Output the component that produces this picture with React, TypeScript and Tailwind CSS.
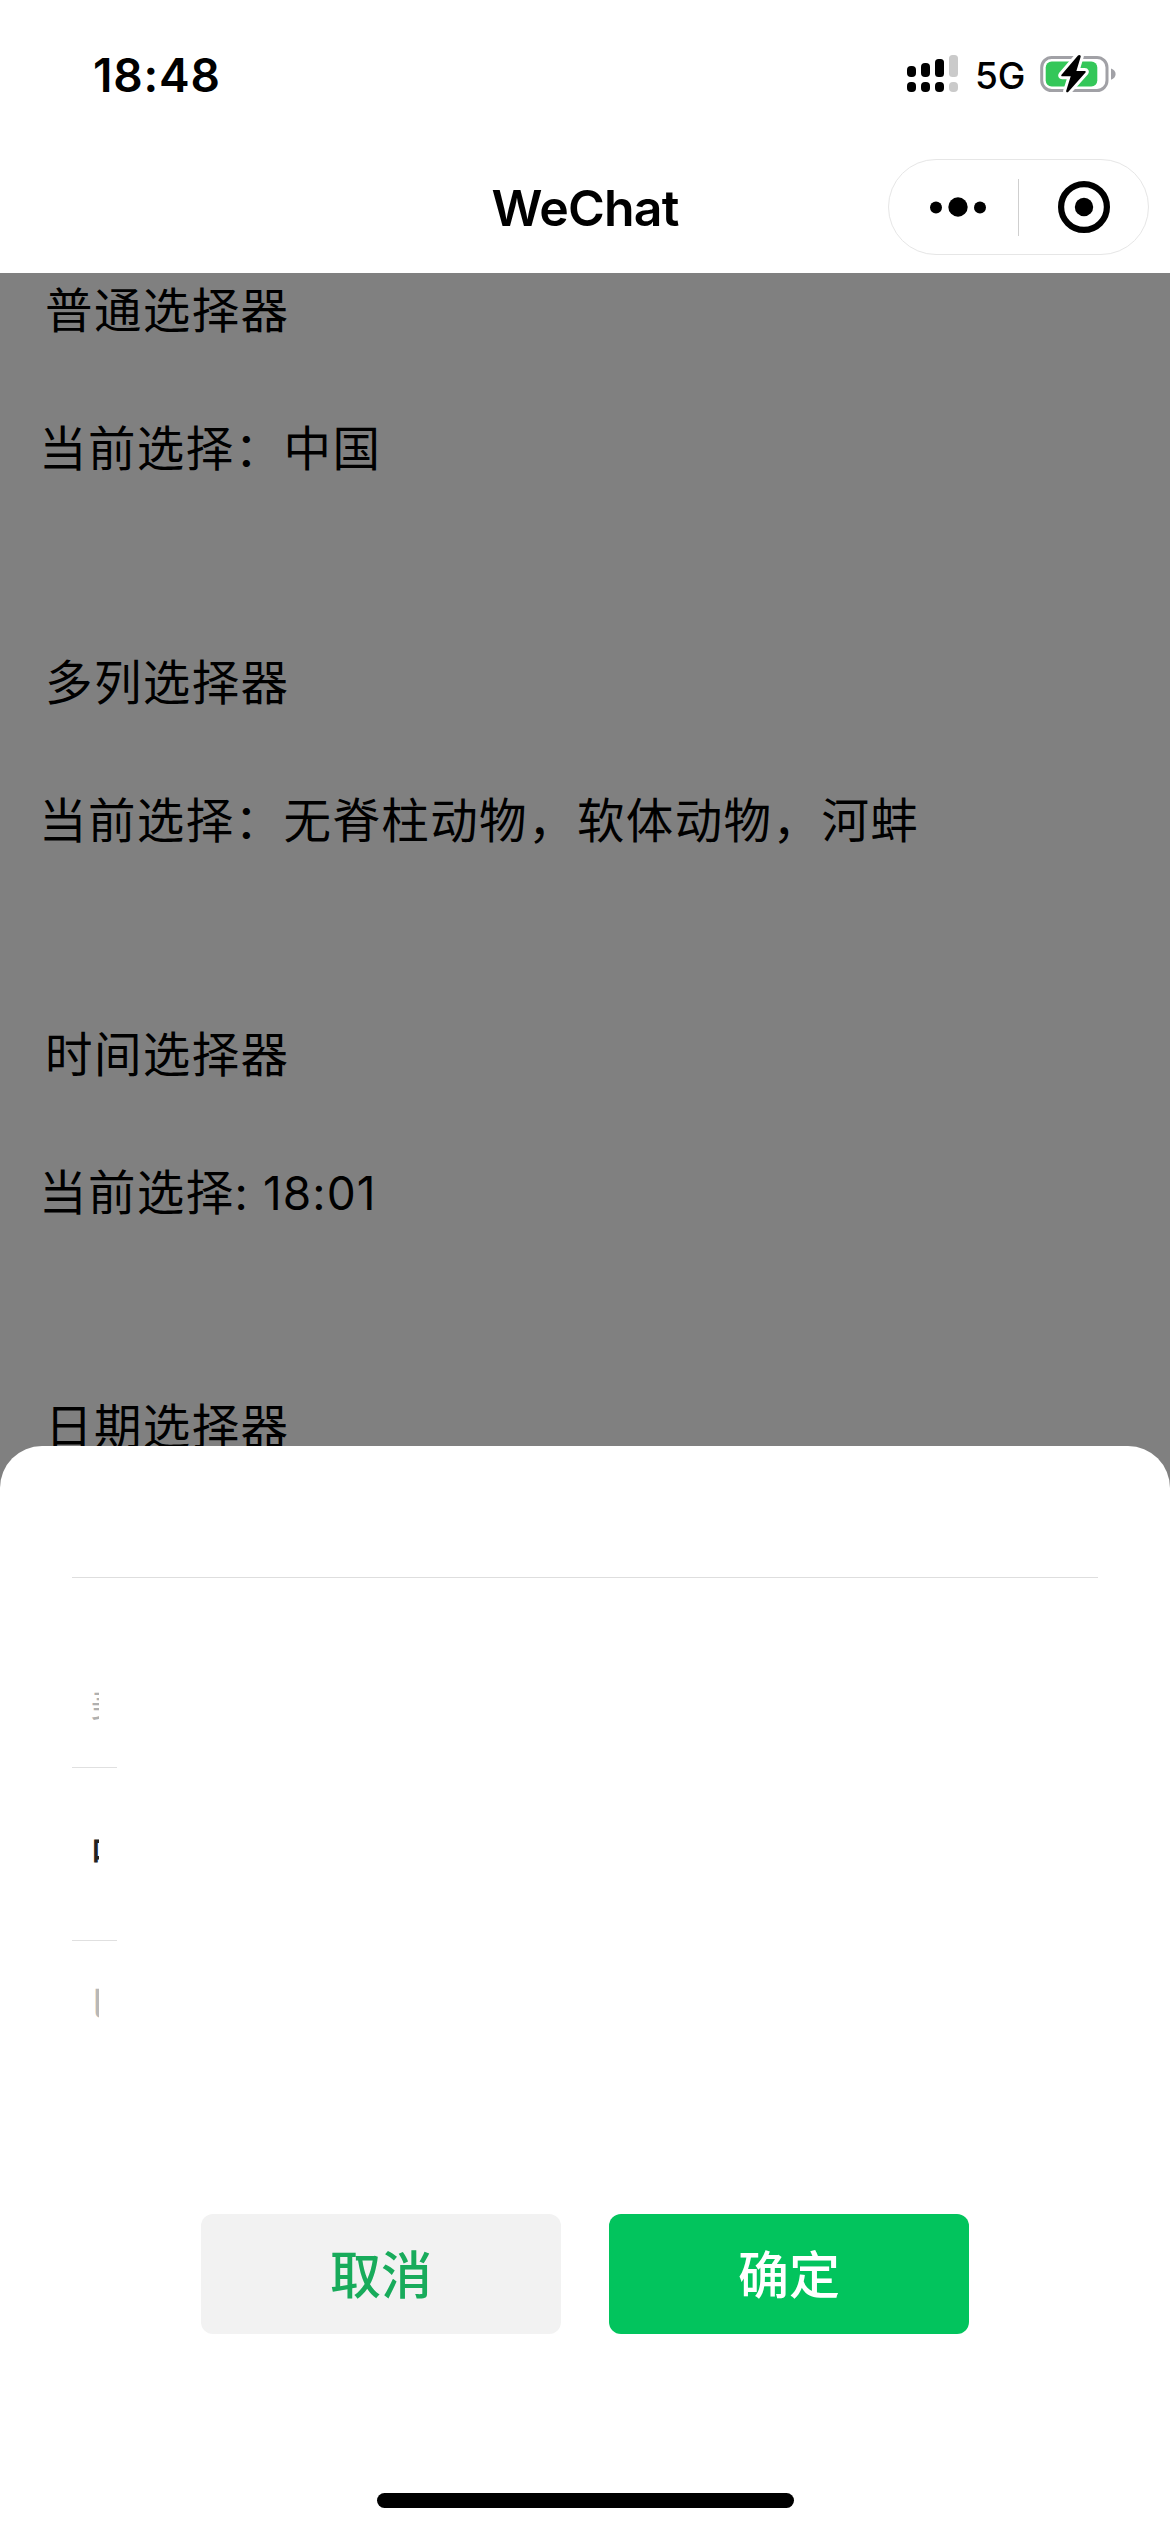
const sections = [
  { title: "普通选择器", colon: "：", value: "中国" },
  { title: "多列选择器", colon: "：", value: "无脊柱动物，软体动物，河蚌" },
  { title: "时间选择器", colon: ": ", value: "18:01" },
  { title: "日期选择器", colon: "：", value: "" },
];

function SignalIcon() {
  return (
    <svg width="52" height="38" viewBox="0 0 52 38" className="shrink-0">
      <rect x="0" y="11" width="9" height="11" rx="4" />
      <rect x="14" y="8" width="9" height="14" rx="4" />
      <rect x="28" y="4" width="9" height="18" rx="3.5" />
      <rect x="42" y="0" width="9" height="22" rx="3.5" fill="#cacaca" />
      <rect x="0" y="27" width="9" height="10" rx="4" />
      <rect x="14" y="27" width="9" height="10" rx="4" />
      <rect x="28" y="27" width="9" height="10" rx="4" />
      <rect x="42" y="27" width="9" height="10" rx="4" fill="#cacaca" />
    </svg>
  );
}

function BatteryIcon() {
  return (
    <svg width="76" height="40" viewBox="0 0 76 40" className="shrink-0">
      <rect x="1.7" y="3.5" width="65.3" height="33" rx="10" fill="none" stroke="#a1a1a6" strokeWidth="3" />
      <path d="M71 14.5c3 1 4.6 3 4.6 5.6s-1.6 4.6-4.6 5.6z" fill="#a1a1a6" />
      <rect x="5.7" y="7.5" width="51.6" height="25" rx="6" fill="#34c759" />
      <path
        d="M38 1.5 21.5 20.8c-.6.8-.2 1.500.7 1.500h8.500l-4.500 14.500c-.4 1.500 1.200 2 2.200 1L45.500 18.500c.6-.8.3-1.600-.7-1.600h-8.400l4.300-14.200c.4-1.500-1.400-2.500-2.700-1.200z"
        stroke="#fff"
        strokeWidth="6"
        strokeLinejoin="round"
        paintOrder="stroke"
      />
    </svg>
  );
}

function Capsule() {
  return (
    <div className="flex h-24 w-[261px] items-center rounded-full border border-[#e6e6e6]">
      <div className="flex h-full flex-1 items-center justify-center">
        <svg width="58" height="22" viewBox="0 0 58 22" className="ml-[8px]">
          <circle cx="7" cy="11.5" r="6" />
          <circle cx="29" cy="11" r="9.7" />
          <circle cx="51" cy="11.5" r="6" />
        </svg>
      </div>
      <div className="h-[57px] w-px bg-[#cfcfcf]" />
      <div className="flex h-full flex-1 items-center justify-center">
        <svg width="52" height="52" viewBox="0 0 52 52">
          <circle cx="26" cy="26" r="22.9" fill="none" stroke="#000" strokeWidth="6.2" />
          <circle cx="26" cy="26" r="9.2" />
        </svg>
      </div>
    </div>
  );
}

function Section({ title, colon, value }: (typeof sections)[number]) {
  const wide = colon === "：";
  return (
    <section className="h-[372px] whitespace-nowrap text-[47.5px] tracking-[1.4px]">
      <h2 className="flex h-[76px] items-center pl-[45px] font-normal">{title}</h2>
      <p className="mt-[62px] flex h-[76px] items-center pl-[39px]">
        {wide ? (
          `当前选择${colon}${value}`
        ) : (
          <>
            当前选择
            <span className="whitespace-pre text-[46px] tracking-[1.1px]">
              {colon}
              {value}
            </span>
          </>
        )}
      </p>
    </section>
  );
}

function PickerSheet() {
  return (
    <div className="absolute inset-x-0 bottom-0 flex h-[1086px] flex-col rounded-t-[42px] bg-white px-[72px]">
      <div className="mt-[131px] h-px shrink-0 bg-[#dedede]" />
      <div className="mt-[71px] flex h-[412px] w-[45px] flex-col">
        <div className="flex h-[118px] w-[27px] items-center overflow-hidden pb-2 pl-[18px] text-[#b0b0b0]">
          <span className="scale-y-75 whitespace-nowrap text-[46px]">美国</span>
        </div>
        <div className="flex h-[174px] items-center border-y border-[#e0e0e0]">
          <div className="flex h-20 w-[27px] items-center overflow-hidden pl-[17.5px] text-[#222]">
            <span className="whitespace-nowrap text-[48px]">中国</span>
          </div>
        </div>
        <div className="flex h-[120px] w-[27px] items-center overflow-hidden pt-1 pl-[18px] font-medium text-[#b8b8b8]">
          <span className="scale-y-75 whitespace-nowrap text-[46px]">巴西</span>
        </div>
      </div>
      <div className="mt-[153px] flex justify-center gap-12 text-[51px] font-medium leading-none">
        <button className="h-[120px] w-[360px] rounded-xl bg-[#f2f2f2] pt-0.5 text-[#18ab5b]">取消</button>
        <button className="h-[120px] w-[360px] rounded-xl bg-[#02c45d] pt-0.5 text-white">确定</button>
      </div>
      <div className="mx-auto mt-auto mb-6 h-[15px] w-[417px] rounded-full bg-black" />
    </div>
  );
}

export default function App() {
  return (
    <div className="relative flex h-[2532px] w-[1170px] flex-col overflow-hidden bg-white font-['Inter','Noto_Sans_CJK_SC',sans-serif] text-black">
      <header className="flex h-[141px] shrink-0 items-start justify-between pr-[54px] pl-[93px]">
        <span className="mt-[47px] text-[46px] leading-[56px] font-semibold tracking-[0.8px]">18:48</span>
        <div className="mt-[54px] flex h-10 items-center">
          <SignalIcon />
          <span className="ml-[16px] w-[65px] pt-0.5 text-[37px] leading-none font-medium">5G</span>
          <BatteryIcon />
        </div>
      </header>
      <nav className="grid h-[132px] shrink-0 grid-cols-[1fr_auto_1fr] items-center pr-[21px]">
        <span />
        <h1 className="pt-0.5 pl-[21px] text-[50px] leading-none font-semibold tracking-[-0.8px]">WeChat</h1>
        <div className="flex justify-end">
          <Capsule />
        </div>
      </nav>
      <main className="flex-1 overflow-hidden bg-[#808080]">
        {sections.map((s) => (
          <Section key={s.title} {...s} />
        ))}
      </main>
      <PickerSheet />
    </div>
  );
}
